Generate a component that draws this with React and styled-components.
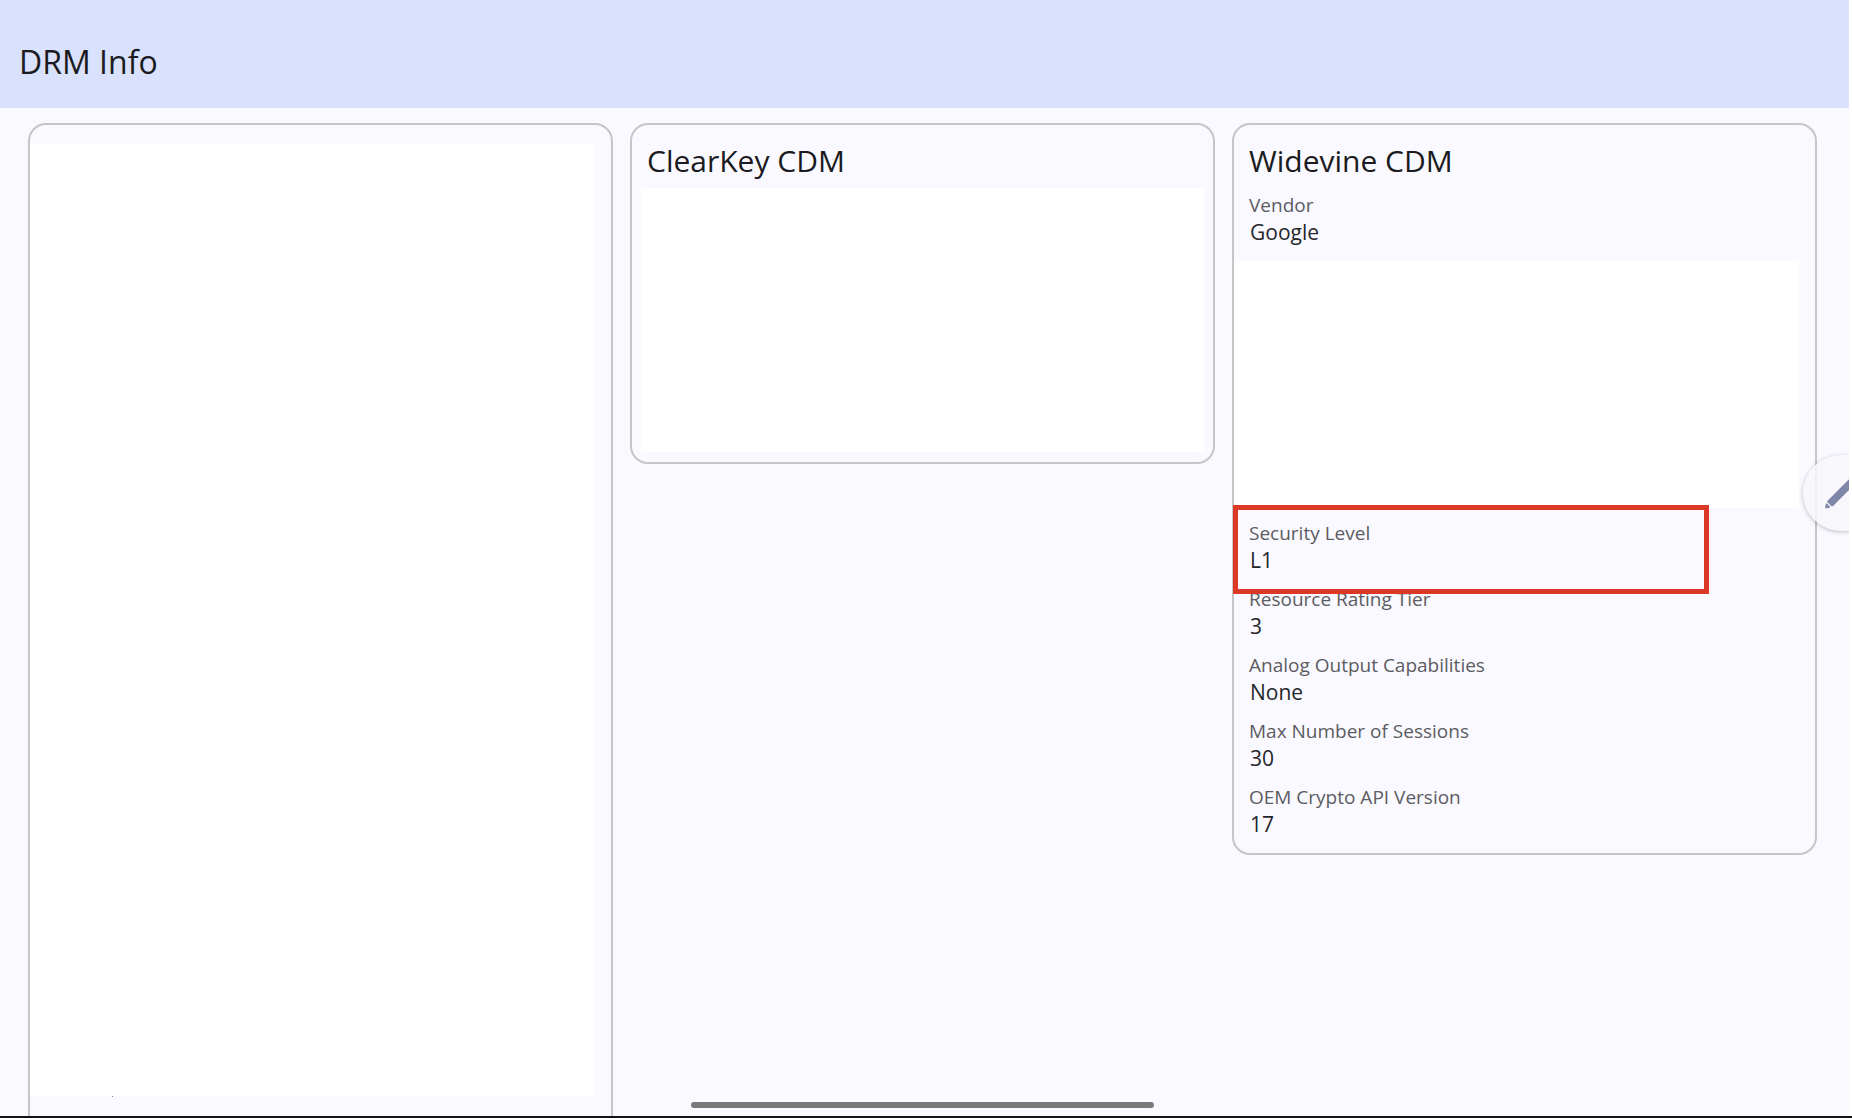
import React from "react";
import styled, { createGlobalStyle } from "styled-components";

const GlobalStyle = createGlobalStyle`
  * {
    box-sizing: border-box;
  }

  body {
    margin: 0;
    background-color: #ffffff;
    font-family: "Open Sans", "Noto Sans", sans-serif;
  }
`;

const Frame = styled.div`
  height: 100vh;
  padding-right: 3px;
  border-bottom: 2px solid #141215;
  background-color: #ffffff;
`;

const Screen = styled.div`
  position: relative;
  display: flex;
  flex-direction: column;
  height: 100%;
  overflow: hidden;
  background-color: #faf9ff;
`;

const TopBar = styled.header`
  flex: none;
  padding: 40px 19px 24px;
  background-color: #dae1fc;
`;

const Title = styled.h1`
  margin: 0;
  font-size: 32px;
  line-height: 44px;
  font-weight: 400;
  color: #1a1b20;
`;

const Columns = styled.main`
  flex: 1;
  min-height: 0;
  display: grid;
  grid-template-columns: repeat(3, 1fr);
  align-items: start;
  gap: 17px;
  padding: 15px 32px 0 28px;
`;

const Card = styled.section`
  padding: 16px 15px 10px;
  border: 2px solid #c6c6c6;
  border-radius: 18px;
`;

const TallCard = styled(Card)`
  height: 100vh;
  padding: 19px 17px 0 0;
`;

const CardTitle = styled.h2`
  margin: 0 0 4px;
  font-size: 30px;
  line-height: 40px;
  font-weight: 400;
  color: #1a1b20;
`;

const Blank = styled.div`
  height: ${(props) => props.$height}px;
  margin: ${(props) => props.$margin || "0"};
  background-color: #ffffff;
`;

const Speck = styled.div`
  width: 1px;
  height: 1px;
  margin-left: 82px;
  background-color: #808086;
`;

const Fields = styled.dl`
  margin: 0;
`;

const Field = styled.div`
  position: relative;
  height: 66px;
  padding-top: 7px;
`;

const Label = styled.dt`
  font-size: 19px;
  line-height: 26px;
  color: #5c5c62;
`;

const Value = styled.dd`
  margin: 0;
  padding-left: 1px;
  font-size: 21px;
  line-height: 28px;
  color: #25262b;
`;

const Highlight = styled.div`
  position: absolute;
  z-index: 1;
  top: -8px;
  left: -16px;
  width: 476px;
  height: 89px;
  border: 5px solid #db3925;
`;

const EditButton = styled.button`
  position: absolute;
  top: 455px;
  right: -30px;
  display: flex;
  align-items: center;
  width: 76px;
  height: 76px;
  padding: 0 0 0 20px;
  border: none;
  border-radius: 50%;
  background-color: rgba(247, 247, 250, 0.85);
  box-shadow: 0 1px 4px rgba(0, 0, 0, 0.25);
`;

const NavHandle = styled.div`
  position: absolute;
  bottom: 8px;
  left: calc(50% - 234px);
  width: 463px;
  height: 6px;
  border-radius: 3px;
  background-color: #7a7a7a;
`;

const capabilities = [
  { label: "Security Level", value: "L1", highlighted: true },
  { label: "Resource Rating Tier", value: "3" },
  { label: "Analog Output Capabilities", value: "None" },
  { label: "Max Number of Sessions", value: "30" },
  { label: "OEM Crypto API Version", value: "17" },
];

const PencilIcon = () => (
  <svg width="40" height="40" viewBox="0 0 40 40" aria-hidden="true">
    <g fill="#8086aa">
      <path d="M4.3 28 L30 2.3 L35.5 7.6 L9.8 33.3 L8.6 33.3 L4.3 29.2 Z" />
      <path d="M3.6 30.2 L7.4 33.9 L6.4 34.8 L3 35.4 Q1.9 35.3 2.1 34.2 L2.8 31 Z" />
    </g>
  </svg>
);

const InfoField = ({ label, value, highlighted }) => (
  <Field>
    <Label>{label}</Label>
    <Value>{value}</Value>
    {highlighted && <Highlight />}
  </Field>
);

const App = () => {
  return (
    <Frame>
      <GlobalStyle />
      <Screen>
        <TopBar>
          <Title>DRM Info</Title>
        </TopBar>
        <Columns>
          <TallCard>
            <Blank $height={952} />
            <Speck />
          </TallCard>
          <Card>
            <CardTitle>ClearKey CDM</CardTitle>
            <Blank $height={264} $margin="7px -6px 0" />
          </Card>
          <Card>
            <CardTitle>Widevine CDM</CardTitle>
            <Fields>
              <InfoField label="Vendor" value="Google" />
            </Fields>
            <Blank $height={247} $margin="10px 1px 5px -15px" />
            <Fields>
              {capabilities.map((item) => (
                <InfoField key={item.label} {...item} />
              ))}
            </Fields>
          </Card>
        </Columns>
        <EditButton type="button" aria-label="Edit">
          <PencilIcon />
        </EditButton>
        <NavHandle />
      </Screen>
    </Frame>
  );
};

export default App;
